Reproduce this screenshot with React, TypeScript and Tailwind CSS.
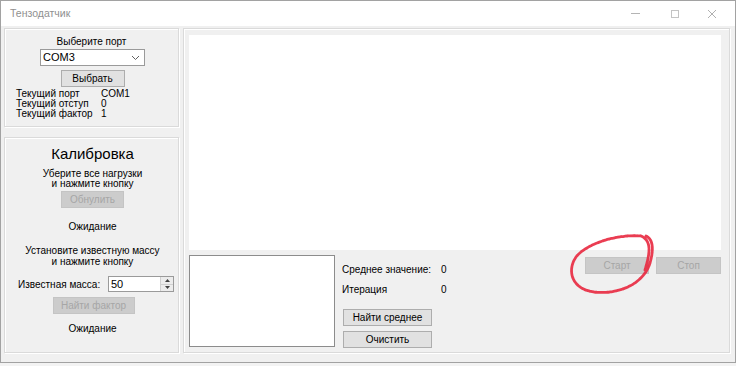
import React from 'react';

const font = { fontFamily: '"Liberation Sans", Arial, sans-serif' };

function WinButton({ label, w, disabled = false }: { label: string; w: string; disabled?: boolean }) {
  return (
    <div
      className={`${w} h-[17px] flex items-center justify-center border text-[10px] leading-none ${
        disabled ? 'bg-[#cccccc] border-[#c4c4c4] text-[#a6a6a6]' : 'bg-[#e1e1e1] border-[#adadad] text-black'
      }`}
    >
      {label}
    </div>
  );
}

function GroupBox({ className, children }: { className: string; children?: React.ReactNode }) {
  return (
    <div className={`border border-[#dadada] shadow-[inset_1px_1px_0_#ffffff,1px_1px_0_#ffffff] ${className}`}>
      {children}
    </div>
  );
}

export default function App() {
  return (
    <div className="relative w-[736px] h-[366px] bg-[#f3f3f3] text-black" style={font}>
      <div className="w-[736px] h-[363px] border border-[#a2a2a2] flex flex-col bg-[#f0f0f0]">
        {/* Title bar */}
        <div className="h-[25px] bg-white flex items-center shrink-0">
          <span className="pl-[9px] text-[10.5px] text-[#8f8f8f]">Тензодатчик</span>
          <div className="ml-auto flex items-center h-full">
            <div className="w-[40px] flex justify-center">
              <div className="w-[9px] h-px bg-[#b4b4b4]" />
            </div>
            <div className="w-[40px] flex justify-center">
              <div className="w-[8px] h-[8px] border border-[#c4c4c4]" />
            </div>
            <div className="w-[40px] flex justify-center pr-[6px]">
              <svg width="10" height="10" viewBox="0 0 10 10">
                <path d="M1 1 L9 9 M9 1 L1 9" stroke="#b0b0b0" strokeWidth="1" />
              </svg>
            </div>
          </div>
        </div>

        {/* Body */}
        <div className="flex-1 flex pt-[2px] pl-[3px] pr-[5px] pb-[9px] gap-[4px] text-[10px]">
          {/* Left column */}
          <div className="w-[175px] flex flex-col gap-[10px]">
            <GroupBox className="h-[99px] flex flex-col items-center pt-[7px]">
              <div className="leading-[12px]">Выберите порт</div>
              <div className="mt-px w-[105px] h-[17px] bg-white border border-[#9a9a9a] flex items-center pl-[2px] pr-[4px] text-[11px] ml-[2px]">
                <span>COM3</span>
                <svg className="ml-auto" width="9" height="6" viewBox="0 0 9 6">
                  <path d="M1 1 L4.5 4.5 L8 1" fill="none" stroke="#606060" strokeWidth="1" />
                </svg>
              </div>
              <div className="mt-[4px] ml-[2px]">
                <WinButton label="Выбрать" w="w-[64px]" />
              </div>
              <div className="self-start pl-[11px] mt-[2px] leading-[10px] grid grid-cols-[85px_auto]">
                <span>Текущий порт</span>
                <span>COM1</span>
                <span>Текущий отступ</span>
                <span>0</span>
                <span>Текущий фактор</span>
                <span>1</span>
              </div>
            </GroupBox>

            <GroupBox className="flex-1 flex flex-col items-center pt-[7px]">
              <div className="text-[15px] leading-[18px] ml-[2px]">Калибровка</div>
              <div className="mt-[6px] leading-[10px] text-center ml-[2px]">
                Уберите все нагрузки
                <br />и нажмите кнопку
              </div>
              <div className="mt-[2px] ml-[2px]">
                <WinButton label="Обнулить" w="w-[63px]" disabled />
              </div>
              <div className="mt-[13px] leading-[12px] ml-[2px]">Ожидание</div>
              <div className="mt-[12px] leading-[11px] text-center ml-[2px]">
                Установите известную массу
                <br />и нажмите кнопку
              </div>
              <div className="self-start mt-[9px] flex items-center">
                <span className="pl-[13px] w-[103px] whitespace-nowrap">Известная масса:</span>
                <div className="w-[66px] h-[16px] bg-white border border-[#9a9a9a] flex items-center text-[11px]">
                  <span className="pl-[2px]">50</span>
                  <div className="ml-auto w-[13px] h-full flex flex-col border-l border-[#d0d0d0]">
                    <div className="flex-1 bg-[#ececec] flex items-center justify-center border-b border-[#d0d0d0]">
                      <svg width="5" height="3" viewBox="0 0 5 3">
                        <path d="M0 3 L2.5 0 L5 3 Z" fill="#404040" />
                      </svg>
                    </div>
                    <div className="flex-1 bg-[#ececec] flex items-center justify-center">
                      <svg width="5" height="3" viewBox="0 0 5 3">
                        <path d="M0 0 L2.5 3 L5 0 Z" fill="#404040" />
                      </svg>
                    </div>
                  </div>
                </div>
              </div>
              <div className="mt-[5px] ml-[4px]">
                <WinButton label="Найти фактор" w="w-[82px]" disabled />
              </div>
              <div className="mt-[9px] leading-[12px] ml-[2px]">Ожидание</div>
            </GroupBox>
          </div>

          {/* Right panel */}
          <GroupBox className="flex-1 flex flex-col pt-[6px] pl-[5px] pr-[8px]">
            <div className="h-[215px] bg-white" />
            <div className="flex mt-[5px]">
              <div className="w-[146px] h-[92px] bg-white border border-[#8c8c8c]" />
              <div className="ml-[7px] flex flex-col">
                <div className="mt-[9px] flex leading-[12px]">
                  <span className="w-[99px]">Среднее значение:</span>
                  <span>0</span>
                </div>
                <div className="mt-[8px] flex leading-[12px]">
                  <span className="w-[99px]">Итерация</span>
                  <span>0</span>
                </div>
                <div className="mt-[13px] ml-px flex flex-col gap-[5px]">
                  <WinButton label="Найти среднее" w="w-[89px]" />
                  <WinButton label="Очистить" w="w-[89px]" />
                </div>
              </div>
              <div className="ml-auto mt-[2px] flex gap-[7px]">
                <WinButton label="Старт" w="w-[64px]" disabled />
                <WinButton label="Стоп" w="w-[65px]" disabled />
              </div>
            </div>
          </GroupBox>
        </div>
      </div>

      {/* red hand-drawn annotation over the Start button */}
      <svg className="absolute left-0 top-0 pointer-events-none" width="736" height="366" viewBox="0 0 736 366">
        <path
          d="M645 270 C649 256, 653 241, 641 236 C616 234, 586 244, 576 257 C567 270, 571 289, 594 292 C620 295, 644 283, 650 263 C654 249, 653 239, 646 236"
          fill="none"
          stroke="#e8283f"
          strokeWidth="2.8"
          strokeLinecap="round"
          strokeDasharray="2.5 0.7"
          opacity="0.9"
        />
      </svg>
    </div>
  );
}
